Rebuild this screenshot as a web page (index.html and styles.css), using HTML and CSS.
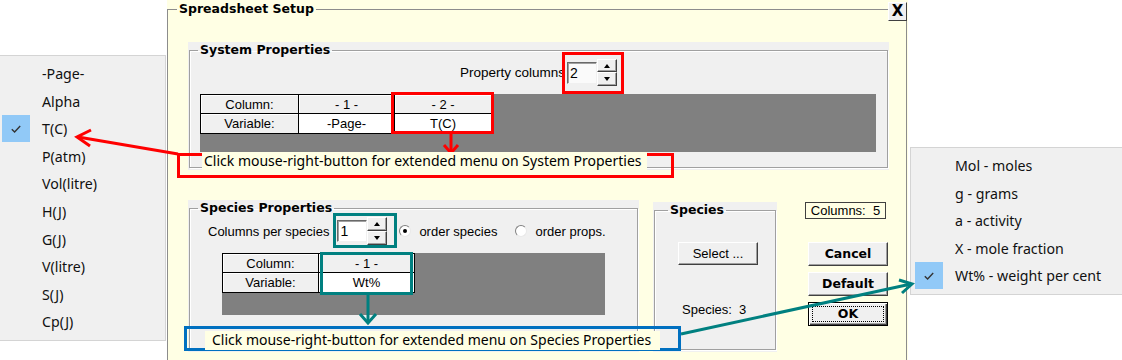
FILE: index.html
```html
<!DOCTYPE html>
<html lang="en">

<head>
  <meta charset="UTF-8">
  <title>Spreadsheet Setup</title>
  <link rel="stylesheet" href="styles.css">
</head>

<body>
  <div class="desk">

    <!-- system property popup -->
    <div class="menu menu-left">
      <div class="item">-Page-</div>
      <div class="item">Alpha</div>
      <div class="item"><span class="check"><svg width="10" height="8" viewBox="0 0 10 8"><polyline points="0.8,4.2 3.6,7 9.2,1" fill="none" stroke="#333" stroke-width="1.4"/></svg></span>T(C)</div>
      <div class="item">P(atm)</div>
      <div class="item">Vol(litre)</div>
      <div class="item">H(J)</div>
      <div class="item">G(J)</div>
      <div class="item">V(litre)</div>
      <div class="item">S(J)</div>
      <div class="item">Cp(J)</div>
    </div>

    <div class="dialog">
      <fieldset class="frame">
        <legend class="dlg-title">Spreadsheet Setup</legend>

        <div class="panel sys-panel">
          <fieldset class="group sys-group">
            <legend>System Properties</legend>
            <div class="prop-row">
              <span>Property columns</span>
              <div class="spin">
                <span class="spin-val">2</span>
                <div class="spin-btns"><span class="up"></span><span class="dn"></span></div>
              </div>
            </div>
            <div class="sheet-bg sys-sheet">
              <table class="sheet">
                <tr>
                  <td class="head c0">Column:</td>
                  <td class="head c1">- 1 -</td>
                  <td class="head c2">- 2 -</td>
                </tr>
                <tr>
                  <td class="head">Variable:</td>
                  <td>-Page-</td>
                  <td>T(C)</td>
                </tr>
              </table>
            </div>
            <div class="hint sys-hint">Click mouse-right-button for extended menu on System Properties</div>
          </fieldset>
        </div>

        <div class="lower">
          <div class="panel spc-panel">
            <fieldset class="group spc-group">
              <legend>Species Properties</legend>
              <div class="spc-row">
                <span>Columns per species</span>
                <div class="spin spin-spc">
                  <span class="spin-val">1</span>
                  <div class="spin-btns"><span class="up"></span><span class="dn"></span></div>
                </div>
                <span class="radio on"></span><span class="radio-lbl">order species</span>
                <span class="radio"></span><span class="radio-lbl">order props.</span>
              </div>
              <div class="sheet-bg spc-sheet">
                <table class="sheet">
                  <tr>
                    <td class="head c0">Column:</td>
                    <td class="head c1">- 1 -</td>
                  </tr>
                  <tr>
                    <td class="head">Variable:</td>
                    <td>Wt%</td>
                  </tr>
                </table>
              </div>
              <div class="hint spc-hint">Click mouse-right-button for extended menu on Species Properties</div>
            </fieldset>
          </div>

          <div class="panel sp-panel">
            <fieldset class="group sp-group">
              <legend>Species</legend>
              <div class="btn select-btn">Select ...</div>
              <div class="sp-count">Species:&nbsp; 3</div>
            </fieldset>
          </div>

          <div class="side">
            <div class="col-count">Columns:&nbsp; 5</div>
            <div class="btn bold-btn">Cancel</div>
            <div class="btn bold-btn">Default</div>
            <div class="btn bold-btn ok-btn"><span>OK</span></div>
          </div>
        </div>
      </fieldset>
      <div class="close">X</div>
    </div>

    <!-- species property popup -->
    <div class="menu menu-right">
      <div class="item">Mol - moles</div>
      <div class="item">g - grams</div>
      <div class="item">a - activity</div>
      <div class="item">X - mole fraction</div>
      <div class="item"><span class="check"><svg width="10" height="8" viewBox="0 0 10 8"><polyline points="0.8,4.2 3.6,7 9.2,1" fill="none" stroke="#333" stroke-width="1.4"/></svg></span>Wt% - weight per cent</div>
    </div>

    <!-- annotations -->
    <svg class="notes" width="1122" height="360" viewBox="0 0 1122 360">
      <g fill="none" stroke="#ff0000" stroke-width="3">
        <rect x="563.5" y="53.5" width="59" height="39"/>
        <rect x="392.5" y="93.5" width="100" height="39"/>
        <rect x="178.5" y="154.5" width="494" height="22"/>
        <line x1="451" y1="133" x2="451" y2="152"/>
        <polyline points="444,145 451,153 458,145"/>
        <line x1="178" y1="154" x2="78" y2="137"/>
        <polyline points="91,130 77,137 90,146"/>
      </g>
      <g fill="none" stroke="#008080" stroke-width="3">
        <rect x="334.5" y="214.5" width="61" height="32"/>
        <rect x="321.5" y="253.5" width="90" height="40"/>
        <line x1="368" y1="295" x2="368" y2="322"/>
        <polyline points="360,314 368,323 376,314"/>
        <line x1="681" y1="334" x2="911" y2="284"/>
        <polyline points="899,280 912,284 902,293"/>
      </g>
      <rect x="185.5" y="327.5" width="494" height="22" fill="none" stroke="#0070c0" stroke-width="3"/>
    </svg>

  </div>
</body>

</html>
```

FILE: styles.css
```css
* {
  box-sizing: border-box;
}

body {
  margin: 0;
  background-color: white;
  font-family: "Liberation Sans", Arial, sans-serif;
  font-size: 13px;
  color: black;
}

.desk {
  position: relative;
  width: 1122px;
  height: 360px;
  overflow: hidden;
}

/* popup menus */
.menu {
  position: absolute;
  background-color: #f0f0f0;
  border: 1px solid #d4d4d4;
  padding: 4px 0 5px 0;
  font-family: "Noto Sans", "Open Sans", sans-serif;
  font-size: 14.2px;
  color: #111;
}

.menu-left {
  left: -3px;
  top: 55px;
  width: 169px;
  height: 286px;
}

.menu-right {
  left: 910px;
  top: 147px;
  width: 240px;
  height: 148px;
}

.item {
  position: relative;
  height: 27.6px;
  line-height: 27.6px;
  padding-left: 44px;
  white-space: nowrap;
}

.check {
  position: absolute;
  left: 4px;
  top: 0;
  width: 28px;
  height: 27px;
  background-color: #91c9f7;
  display: flex;
  align-items: center;
  justify-content: center;
}

/* dialog */
.dialog {
  position: absolute;
  left: 167px;
  top: 0;
  width: 741px;
  height: 360px;
  background-color: #ffffe4;
}

.frame {
  margin: 0;
  padding: 0;
  width: 740px;
  height: 380px;
  min-width: 0;
  border: 1px solid #8c8c8c;
  border-bottom: none;
}

.dlg-title {
  margin-left: 9px;
  padding: 0 2px;
  line-height: 18px;
  font-family: "DejaVu Sans", sans-serif;
  font-weight: bold;
  font-size: 12.5px;
}

.close {
  position: absolute;
  left: 721px;
  top: 2px;
  width: 19px;
  height: 19px;
  background-color: #f0f0f0;
  border: 1px solid;
  border-color: #fff #404040 #404040 #fff;
  font-family: "DejaVu Sans", sans-serif;
  font-weight: bold;
  font-size: 15px;
  line-height: 16px;
  text-align: center;
}

.panel {
  background-color: #f0f0f0;
}

.group {
  margin: 0 1px 0 1px;
  padding: 0;
  min-width: 0;
  border: 1px solid #a0a0a0;
  box-shadow: 1px 1px 0 #fff, inset 1px 1px 0 #fff;
}

.group legend {
  margin-left: 8px;
  padding: 0 2px;
  line-height: 16px;
  font-family: "DejaVu Sans", sans-serif;
  font-weight: bold;
  font-size: 12.5px;
}

/* system properties */
.sys-panel {
  margin: 24px 0 0 20px;
  width: 701px;
  height: 128px;
}

.sys-group {
  height: 126px;
}

.prop-row {
  display: flex;
  justify-content: center;
  align-items: center;
  gap: 2px;
  margin-top: 1px;
  height: 27px;
  font-size: 13.5px;
}

.spin {
  display: flex;
  align-items: center;
}

.spin-val {
  width: 30px;
  height: 22px;
  line-height: 20px;
  padding-left: 2px;
  background-color: #fafafa;
  border: 1px solid;
  border-color: #696969 #f0f0f0 #f0f0f0 #696969;
  box-shadow: inset 1px 1px 0 #a0a0a0;
  font-size: 14px;
}

.spin-btns {
  display: flex;
  flex-direction: column;
  width: 20px;
}

.spin-btns span {
  display: flex;
  align-items: center;
  justify-content: center;
  background-color: #f0f0f0;
  border: 1px solid;
  border-color: #fff #404040 #404040 #fff;
  box-shadow: inset -1px -1px 0 #a0a0a0;
}

.spin-btns .up {
  height: 13px;
}

.spin-btns .dn {
  height: 14px;
}

.spin-btns .up::after {
  content: "";
  border-left: 3.5px solid transparent;
  border-right: 3.5px solid transparent;
  border-bottom: 4px solid black;
}

.spin-btns .dn::after {
  content: "";
  border-left: 3.5px solid transparent;
  border-right: 3.5px solid transparent;
  border-top: 4px solid black;
}

.sheet-bg {
  background-color: #808080;
}

.sys-sheet {
  margin: 8px 0 0 10px;
  width: 676px;
  height: 58px;
}

.sheet {
  border-collapse: collapse;
  font-size: 13px;
  text-align: center;
}

.sheet td {
  width: 96px;
  height: 20px;
  padding: 0;
  background-color: white;
  border: 1px solid #000;
  line-height: 17px;
}

.sheet td.head {
  background-color: #f0f0f0;
  box-shadow: inset 1px 1px 0 #fff;
}

.sheet tr:first-child td {
  height: 19px;
}

.sheet td.c0 {
  width: 98px;
}

.sheet td.c2 {
  width: 97px;
}

.hint {
  position: relative;
  z-index: 1;
  height: 18px;
  line-height: 18px;
  background-color: #ffffe4;
  font-family: "Noto Sans", "Open Sans", sans-serif;
  font-size: 14px;
  white-space: nowrap;
}

.sys-hint {
  margin-left: 12px;
  width: 445px;
  padding-left: 2px;
}

/* lower row */
.lower {
  display: flex;
  align-items: flex-start;
  margin: 30px 0 0 20px;
}

.spc-panel {
  width: 451px;
  height: 152px;
}

.spc-group {
  height: 150px;
}

.spc-row {
  display: flex;
  align-items: center;
  margin-top: 1px;
  padding-left: 18px;
  height: 28px;
}

.spin-spc {
  margin-left: 8px;
}

.spin-spc .spin-val {
  background-color: white;
}

.spin-spc .up {
  height: 14px;
}

.radio {
  width: 12px;
  height: 12px;
  border-radius: 50%;
  border: 1px solid;
  border-color: #808080 #e8e8e8 #e8e8e8 #808080;
  background-color: white;
  display: flex;
  align-items: center;
  justify-content: center;
  margin-left: 12px;
}

.radio.on::after {
  content: "";
  width: 4px;
  height: 4px;
  border-radius: 50%;
  background-color: black;
}

.radio + .radio-lbl {
  margin-left: 8px;
}

.radio-lbl + .radio {
  margin-left: 18px;
}

.spc-sheet {
  margin: 8px 0 0 32px;
  width: 383px;
  height: 62px;
}

.spc-sheet .sheet td {
  width: 96px;
}

.spc-hint {
  margin: 16px 0 0 15px;
  width: 455px;
  height: 19px;
  padding-left: 7px;
}

.sp-panel {
  margin: 2px 0 0 14px;
  width: 124px;
  height: 150px;
}

.sp-group {
  height: 148px;
}

.sp-group legend {
  margin-left: 13px;
}

.btn {
  background-color: #f0f0f0;
  border: 1px solid;
  border-color: #fff #404040 #404040 #fff;
  box-shadow: inset -1px -1px 0 #a0a0a0;
  text-align: center;
}

.select-btn {
  margin: 24px 0 0 23px;
  width: 80px;
  height: 23px;
  line-height: 21px;
}

.sp-count {
  margin: 37px 0 0 27px;
  line-height: 16px;
}

.side {
  display: flex;
  flex-direction: column;
  gap: 6px;
  margin: 2px 0 0 28px;
}

.col-count {
  width: 81px;
  height: 17px;
  line-height: 15px;
  border: 1px solid #404040;
  text-align: center;
  margin-bottom: 17px;
}

.bold-btn {
  margin-left: 3px;
  width: 80px;
  height: 24px;
  line-height: 22px;
  font-family: "DejaVu Sans", sans-serif;
  font-weight: bold;
  font-size: 12.5px;
}

.ok-btn {
  border: 1px solid black;
  box-shadow: inset 1px 1px 0 #fff, inset -1px -1px 0 #404040, inset -2px -2px 0 #a0a0a0;
  padding: 3px;
  line-height: 14px;
}

.ok-btn span {
  display: block;
  height: 16px;
  border: 1px dotted #000;
}

/* annotation layer */
.notes {
  position: absolute;
  left: 0;
  top: 0;
  pointer-events: none;
}
```
